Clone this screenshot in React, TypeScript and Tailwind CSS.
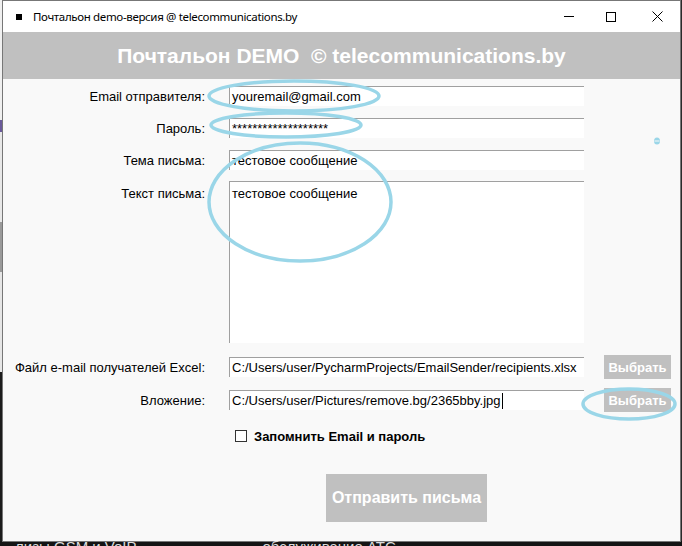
import React from "react";

const F = { fontFamily: '"Liberation Sans", Arial, sans-serif' };

function Entry({ value, cursor }: { value: string; cursor?: boolean }) {
  return (
    <div className="w-[355px] h-[20px] bg-white border-t border-l border-[#a0a0a0] flex items-center pl-[2px] text-[13px] text-black whitespace-nowrap overflow-hidden leading-none">
      <span>{value}</span>
      {cursor && <span className="inline-block w-px h-[16px] bg-black ml-[1px]" />}
    </div>
  );
}

function Label({ children, top }: { children: React.ReactNode; top?: boolean }) {
  return (
    <div
      className={`w-[202px] shrink-0 text-right text-[13px] text-black leading-none whitespace-nowrap ${top ? "pt-[6px]" : ""}`}
    >
      {children}
    </div>
  );
}

function PickButton() {
  return (
    <div className="ml-[20px] w-[67px] h-[24px] bg-[#c0c0c0] text-white font-bold text-[13px] flex items-center justify-center leading-none">
      Выбрать
    </div>
  );
}

export default function App() {
  return (
    <div className="w-[682px] h-[546px] relative overflow-hidden bg-[#f4f4f4]" style={F}>
      <div className="flex h-[541px]">
        {/* left background strip */}
        <div className="w-[2px] flex flex-col">
          <div className="h-[120px] bg-[#f0f0f0]" />
          <div className="h-[12px] bg-[#6a5a9a]" />
          <div className="h-[90px] bg-[#e8e8e8]" />
          <div className="h-[50px] bg-[#9a9a9a]" />
          <div className="h-[100px] bg-[#e6e6e6]" />
          <div className="flex-1 bg-[#1c1c1c]" />
        </div>
        {/* window */}
        <div className="w-[679px] h-[542px] border border-[#777777] flex flex-col bg-[#f9f9f9]">
          {/* title bar */}
          <div className="h-[31px] bg-white flex items-center shrink-0">
            <div className="ml-[13px] w-[6px] h-[6px] bg-black" />
            <div className="ml-[11px] text-[11.5px] text-black leading-none" style={{ fontFamily: '"Noto Sans", "Liberation Sans", sans-serif', letterSpacing: "-0.35px" }}>
              Почтальон demo-версия @ telecommunications.by
            </div>
            <div className="flex-1" />
            <div className="w-[46px] h-[31px] flex items-center justify-center pl-[8px]">
              <div className="w-[10px] h-px bg-black" />
            </div>
            <div className="w-[46px] h-[31px] flex items-center justify-center">
              <div className="w-[10px] h-[10px] border border-black" />
            </div>
            <div className="w-[46px] h-[31px] flex items-center justify-center">
              <svg width="11" height="11" viewBox="0 0 11 11">
                <path d="M0.5 0.5 L10.5 10.5 M10.5 0.5 L0.5 10.5" stroke="black" strokeWidth="1" fill="none" />
              </svg>
            </div>
          </div>
          {/* header */}
          <div className="h-[47px] bg-[#c0c0c0] flex items-center justify-center shrink-0">
            <span className="text-white font-bold text-[21px] leading-none whitespace-pre">Почтальон DEMO  © telecommunications.by</span>
          </div>
          {/* content */}
          <div className="flex-1 flex flex-col pt-[7px]">
            <div className="flex items-center gap-[24px]">
              <Label>Email отправителя:</Label>
              <Entry value="youremail@gmail.com" />
            </div>
            <div className="flex items-center gap-[24px] mt-[12px]">
              <Label>Пароль:</Label>
              <Entry value="*******************" />
            </div>
            <div className="flex items-center gap-[24px] mt-[12px]">
              <Label>Тема письма:</Label>
              <Entry value="тестовое сообщение" />
            </div>
            <div className="flex items-start gap-[24px] mt-[11px]">
              <Label top>Текст письма:</Label>
              <div className="w-[355px] h-[162px] bg-white border-t border-l border-[#a0a0a0] pl-[2px] pt-[5px] text-[13px] text-black leading-none">
                тестовое сообщение
              </div>
            </div>
            <div className="flex items-center mt-[12px] h-[24px]">
              <Label>Файл e-mail получателей Excel:</Label>
              <div className="w-[24px]" />
              <Entry value="C:/Users/user/PycharmProjects/EmailSender/recipients.xlsx" />
              <PickButton />
            </div>
            <div className="flex items-center mt-[9px] h-[24px]">
              <Label>Вложение:</Label>
              <div className="w-[24px]" />
              <Entry value="C:/Users/user/Pictures/remove.bg/2365bby.jpg" cursor />
              <PickButton />
            </div>
            <div className="flex items-center mt-[14px] h-[20px] pl-[232px]">
              <div className="w-[12px] h-[12px] border border-[#333333] bg-white" />
              <span className="ml-[7px] text-[13px] font-bold text-black leading-none">Запомнить Email и пароль</span>
            </div>
            <div className="flex mt-[28px] pl-[226px]">
              <div className="w-[355px] flex justify-center">
                <div className="w-[161px] h-[48px] bg-[#c0c0c0] flex items-center justify-center text-white font-bold text-[16px] leading-none">
                  Отправить письма
                </div>
              </div>
            </div>
          </div>
        </div>
        <div className="w-px bg-[#2a2a2a]" />
      </div>
      {/* bottom background strip */}
      <div className="h-[5px] bg-[#141414] overflow-hidden flex text-[#dcdcdc] text-[15px] leading-none">
        <span className="ml-[15px] -mt-[2px] whitespace-nowrap">лизы GSM и VoIP</span>
        <span className="ml-[126px] -mt-[2px] whitespace-nowrap">обслуживание АТС</span>
      </div>
      {/* annotation overlay */}
      <svg className="absolute inset-0 pointer-events-none" width="682" height="546" viewBox="0 0 682 546">
        <g fill="none" stroke="#9ad6e8" strokeWidth="3.5">
          <ellipse cx="294" cy="96" rx="85" ry="15" />
          <ellipse cx="286" cy="125" rx="75" ry="12" />
          <ellipse cx="300" cy="202" rx="91" ry="59" />
          <ellipse cx="629" cy="404" rx="46" ry="15" />
        </g>
        <ellipse cx="657" cy="141" rx="3" ry="3.5" fill="#9ad6e8" />
        <line x1="654.5" y1="141" x2="659.5" y2="141" stroke="#f9f9f9" strokeWidth="1" />
      </svg>
    </div>
  );
}
